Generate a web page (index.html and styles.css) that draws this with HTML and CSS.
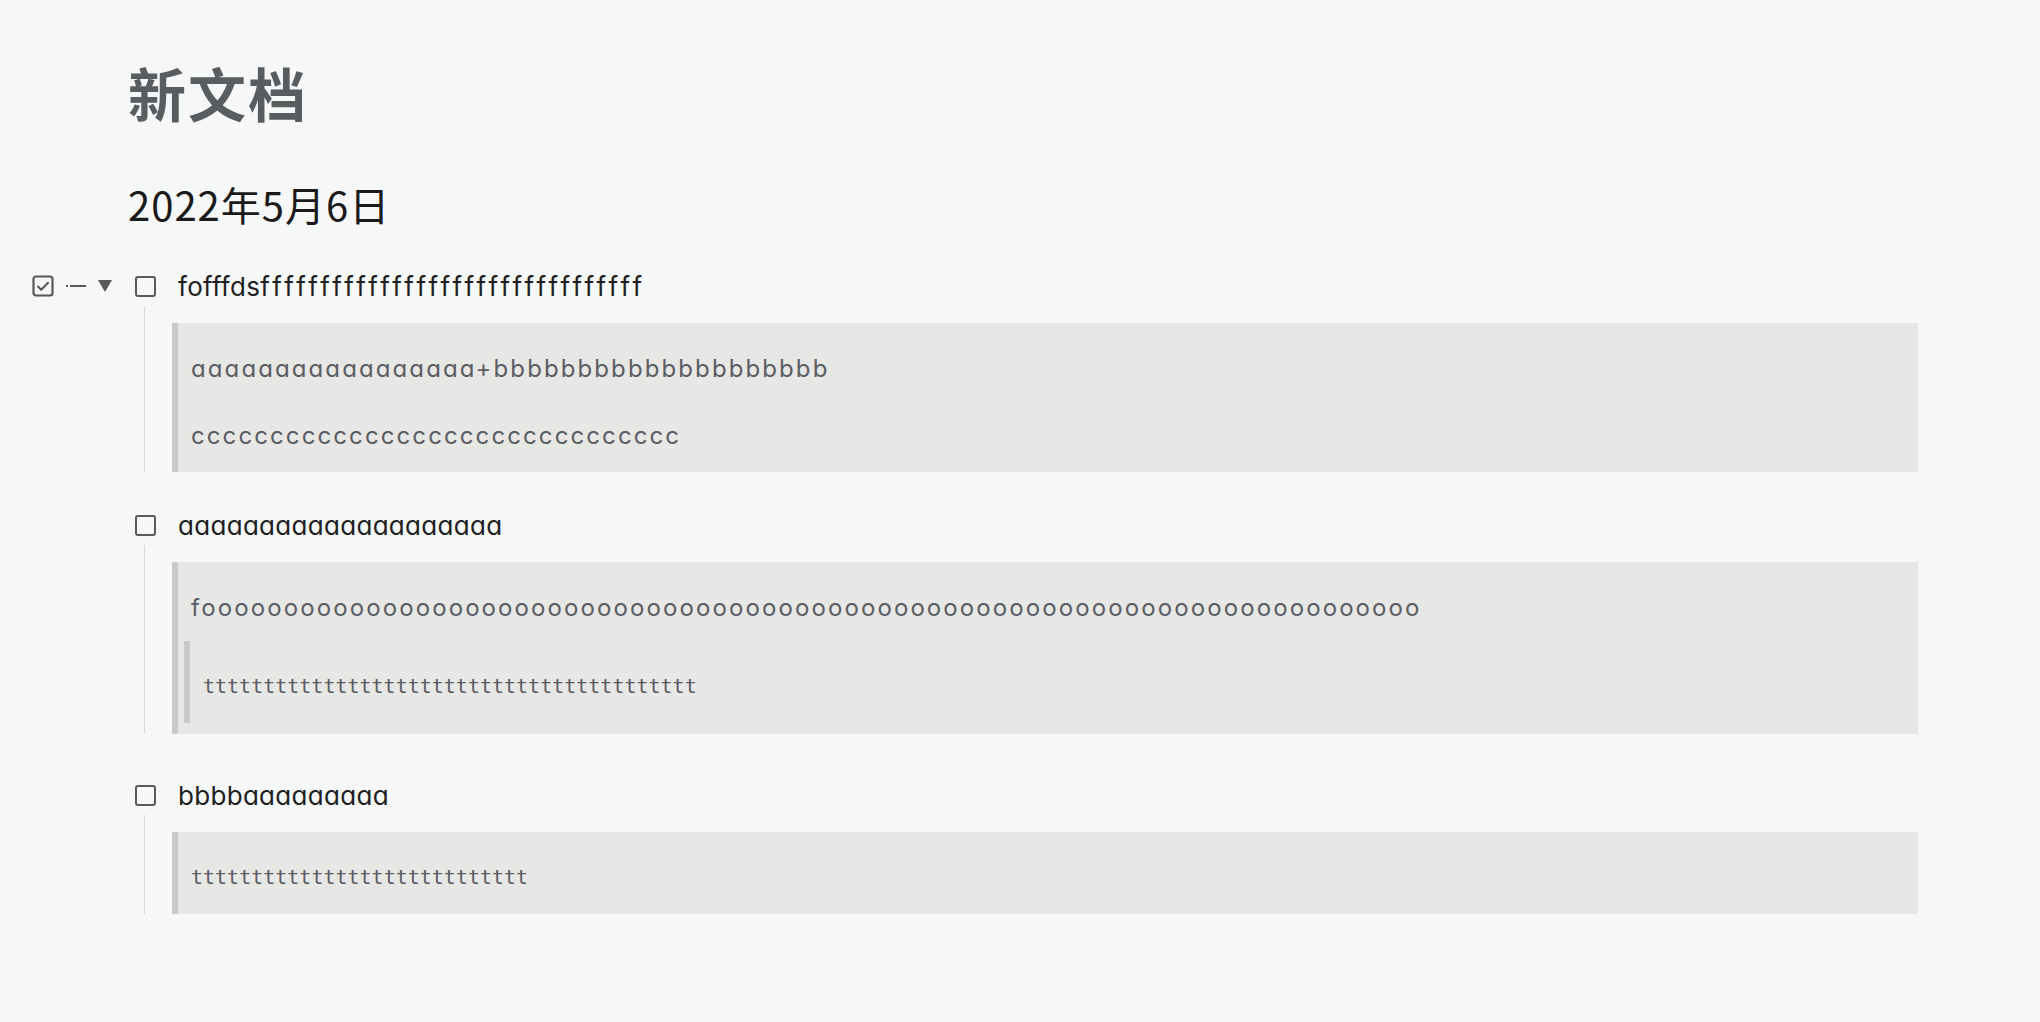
FILE: index.html
```html
<!DOCTYPE html>
<html lang="zh">
<head>
    <meta charset="UTF-8">
    <title>新文档</title>
    <link rel="stylesheet" href="styles.css">
</head>
<body>
    <div class="page">
        <h1 class="doc-title">新文档</h1>
        <h2 class="doc-date">2022年5月6日</h2>

        <ul class="todo-list">
            <li class="todo">
                <div class="todo-row">
                    <div class="row-tools">
                        <svg class="tool-check" viewBox="0 0 22 22" width="22" height="22">
                            <rect x="1.5" y="1.5" width="19" height="19" rx="2.5" fill="none" stroke="#58595b" stroke-width="2.2"/>
                            <path d="M6 11.5l3.2 3.2L16 7.8" fill="none" stroke="#58595b" stroke-width="2" stroke-linecap="round" stroke-linejoin="round"/>
                        </svg>
                        <span class="tool-dash"><i></i><b></b></span>
                        <span class="tool-caret"></span>
                    </div>
                    <span class="box"></span>
                    <span class="todo-text">fofffds<span class="f-run">ffffffffffffffffffffffffffffffff</span></span>
                </div>
                <div class="todo-children">
                    <div class="quote">
                        <p>aaaaaaaaaaaaaaaaa+bbbbbbbbbbbbbbbbbbbb</p>
                        <p>ccccccccccccccccccccccccccccccc</p>
                    </div>
                </div>
            </li>

            <li class="todo">
                <div class="todo-row">
                    <span class="box"></span>
                    <span class="todo-text">aaaaaaaaaaaaaaaaaaaa</span>
                </div>
                <div class="todo-children">
                    <div class="quote">
                        <p>foooooooooooooooooooooooooooooooooooooooooooooooooooooooooooooooooooooooooo</p>
                        <div class="quote nested">
                            <p class="t-line">ttttttttttttttttttttttttttttttttttttttttt</p>
                        </div>
                    </div>
                </div>
            </li>

            <li class="todo todo-far">
                <div class="todo-row">
                    <span class="box"></span>
                    <span class="todo-text">bbbbaaaaaaaaa</span>
                </div>
                <div class="todo-children">
                    <div class="quote">
                        <p class="t-line">tttttttttttttttttttttttttttt</p>
                    </div>
                </div>
            </li>
        </ul>
    </div>
</body>
</html>
```

FILE: styles.css
```css
* {
    margin: 0;
    padding: 0;
    box-sizing: border-box;
}

body {
    font-family: 'Inter', 'Noto Sans CJK SC', sans-serif;
    font-feature-settings: "cv11";
    background: #f6f7f7;
    color: #1f1f1f;
    min-height: 100vh;
}

.page {
    padding: 0 122px 0 128px;
}

.doc-title {
    font-family: 'Noto Sans CJK SC', sans-serif;
    font-size: 58px;
    font-weight: 700;
    letter-spacing: 2px;
    line-height: 80px;
    color: #595c60;
    margin-top: 52px;
}

.doc-date {
    font-family: 'Noto Sans CJK SC', sans-serif;
    font-size: 40px;
    font-weight: 400;
    letter-spacing: 1px;
    line-height: 52px;
    color: #1a1a1a;
    margin-top: 46px;
}

.todo-list {
    list-style: none;
    margin: 36px 0 0 7px;
}

.todo + .todo {
    margin-top: 33px;
}

.todo.todo-far {
    margin-top: 41px;
}

.todo-row {
    position: relative;
    display: flex;
    align-items: center;
    height: 40px;
}

.box {
    width: 21px;
    height: 21px;
    border: 2.2px solid #58595b;
    border-radius: 3px;
    margin-right: 22px;
    flex-shrink: 0;
}

.todo-text {
    font-size: 26px;
    letter-spacing: 0.3px;
    color: #1f1f1f;
}

.f-run {
    letter-spacing: 3.4px;
}

/* hover tools to the left of the first item */
.row-tools {
    position: absolute;
    left: -103px;
    top: 9px;
    display: flex;
    align-items: center;
    gap: 12px;
}

.tool-dash {
    display: flex;
    align-items: center;
    gap: 2px;
}

.tool-dash i {
    width: 2px;
    height: 2px;
    background: #58595b;
}

.tool-dash b {
    width: 16px;
    height: 2px;
    background: #58595b;
}

.tool-caret {
    width: 0;
    height: 0;
    border-left: 7.5px solid transparent;
    border-right: 7.5px solid transparent;
    border-top: 12px solid #58595b;
}

.todo-children {
    margin-left: 9px;
    border-left: 1px solid #d8d8d8;
    padding: 17px 0 0 27px;
}

.quote {
    background: #e7e7e5;
    border-left: 6px solid #c9c9c9;
    padding: 12px 0 3px 6px;
}

.quote p {
    font-size: 24px;
    letter-spacing: 2.1px;
    line-height: 35px;
    padding: 16px 0 16px 7px;
    color: #5a5d63;
}

.quote.nested {
    margin-bottom: 8px;
}

.quote p.t-line {
    font-family: 'DejaVu Sans Mono', monospace;
    font-size: 20px;
    letter-spacing: 0;
}
```
